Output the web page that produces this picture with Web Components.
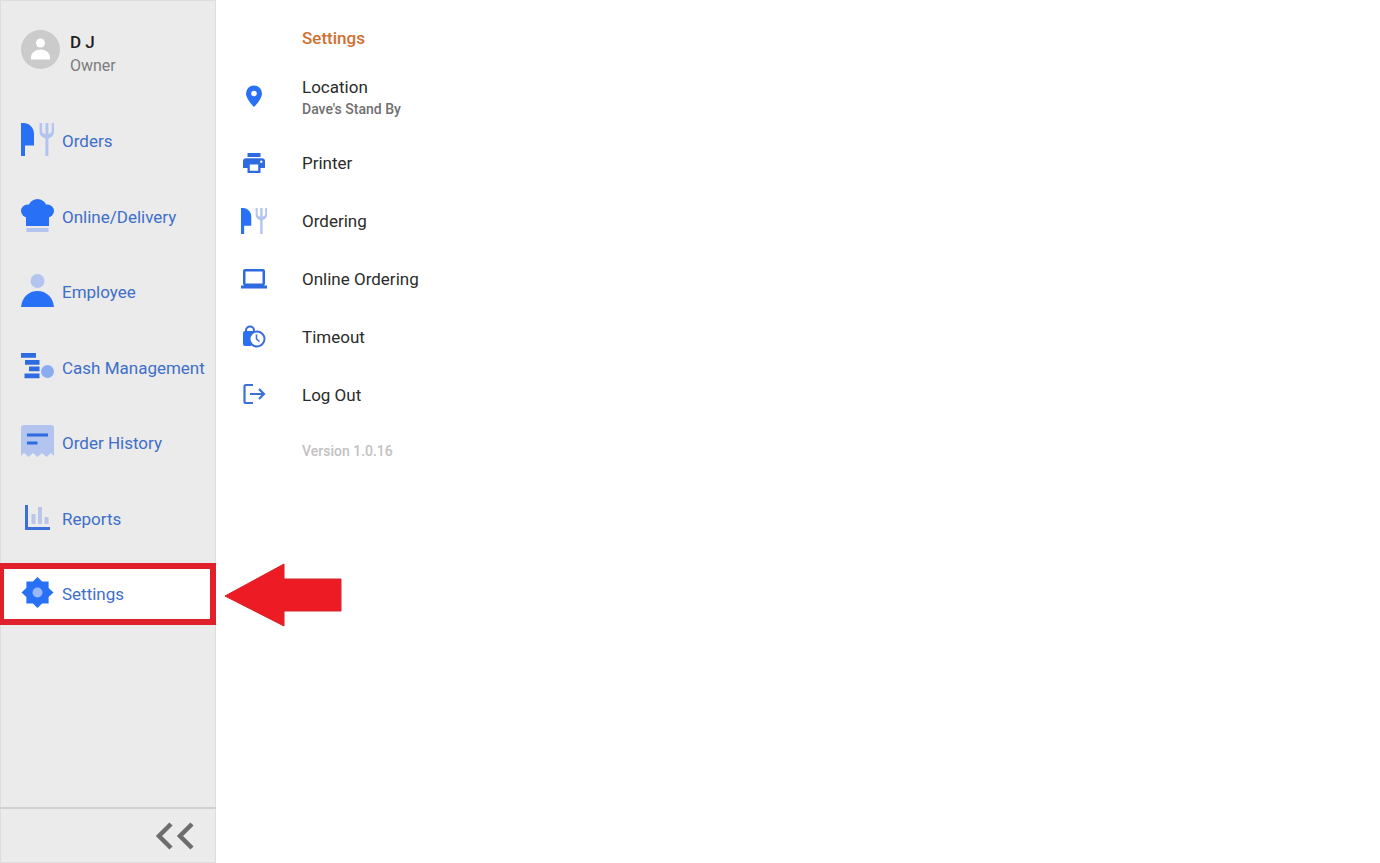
<!DOCTYPE html>
<html lang="en">
<head>
<meta charset="utf-8">
<title>Settings</title>
<style>
    body {
        margin: 0;
        font-family: Roboto, "Liberation Sans", sans-serif;
        font-size: 17px;
        line-height: 22px;
        color: #2b2b2b;
        background: #fff;
    }
</style>
</head>
<body>
<pos-app>
    <side-bar slot="sidebar">
        <user-badge slot="user" name="D J" role-name="Owner"></user-badge>
        <nav-item icon="cutlery" href="#orders">Orders</nav-item>
        <nav-item icon="chef" href="#online">Online/Delivery</nav-item>
        <nav-item icon="person" href="#employee">Employee</nav-item>
        <nav-item icon="cash" href="#cash">Cash Management</nav-item>
        <nav-item icon="receipt" href="#history">Order History</nav-item>
        <nav-item icon="chart" href="#reports">Reports</nav-item>
        <nav-item icon="gear" href="#settings" active>Settings<pointer-arrow slot="pointer"></pointer-arrow></nav-item>
    </side-bar>
    <settings-panel heading="Settings" version="Version 1.0.16">
        <settings-row icon="pin" tall>Location<span slot="note">Dave's Stand By</span></settings-row>
        <settings-row icon="printer">Printer</settings-row>
        <settings-row icon="cutlery">Ordering</settings-row>
        <settings-row icon="laptop">Online Ordering</settings-row>
        <settings-row icon="timeout">Timeout</settings-row>
        <settings-row icon="logout">Log Out</settings-row>
    </settings-panel>
</pos-app>

<script>
const icons = {
    cutlery: `<svg viewBox="0 0 33 33">
        <path fill="#2870f5" d="M0 0h2.500C9 .5 13 5 13 11v11.500H4V33H0z"/>
        <path fill="#b3c5ee" d="M18.500 0h2.600v8q0 2 3.300 3V0h3v11q3.300-1 3.300-3V0H33v9q0 4.500-5.600 6.500V33h-3V15.500q-5.900-2-5.900-6.500z"/>
    </svg>`,
    chef: `<svg viewBox="0 0 33 33">
        <circle cx="6.500" cy="12" r="6.500" fill="#2870f5"/>
        <circle cx="26.500" cy="12" r="6.500" fill="#2870f5"/>
        <circle cx="16.500" cy="9.500" r="9.500" fill="#2870f5"/>
        <path fill="#2870f5" d="M5 12h23v15H5z"/>
        <path fill="#b3c5ee" d="M5.500 29h22v4h-22z"/>
    </svg>`,
    person: `<svg viewBox="0 0 33 33">
        <circle cx="16.500" cy="7" r="7" fill="#b3c5ee"/>
        <path fill="#2870f5" d="M0 33C1 23 8 17 16.500 17S32 23 33 33z"/>
    </svg>`,
    cash: `<svg viewBox="0 0 33 33">
        <path fill="#2f6be0" d="M0 3h15v4.800H0zM4 10h14.500v4.800H4zM8 16.500h10.500v4.800H8zM3.500 23.500h15v4.800h-15z"/>
        <circle cx="26.500" cy="21.500" r="6.500" fill="#8babf0"/>
    </svg>`,
    receipt: `<svg viewBox="0 0 33 33">
        <path fill="#b3c5ee" d="M3 0h27q3 0 3 3v28l-3-3-4.500 4-4.500-4-4.500 4-4.500-4-4.500 4L3 28l-3 3V3q0-3 3-3z"/>
        <path fill="#2f6be0" d="M6 8.500h21v3H6zM6 16.500h10.500v3H6z"/>
    </svg>`,
    chart: `<svg viewBox="0 0 33 33">
        <path fill="#3b70da" d="M4 4h3v22h22v3H4z"/>
        <path fill="#b9c6e9" d="M10.500 13h4v10h-4zM17 6h4v17h-4zM23.500 16h4v7h-4z"/>
    </svg>`,
    gear: `<svg viewBox="0 0 33 33">
        <path fill="#2870f5" d="M16.500 1l4.600 4.500h6.500V12l4.900 4.500-4.900 4.600v6.500h-6.500L16.500 32l-4.600-4.400H5.400v-6.500L.5 16.500 5.400 12V5.500h6.500z"/>
        <circle cx="16.500" cy="16.500" r="5" fill="#98b8fa"/>
    </svg>`,
    pin: `<svg viewBox="0 0 26 26">
        <path fill="#2870f5" fill-rule="evenodd" d="M13 .5a8 8 0 0 0-8 8c0 5.800 8 13.500 8 13.500s8-7.700 8-13.500a8 8 0 0 0-8-8zm0 5.200a2.800 2.800 0 1 1 0 5.600 2.800 2.800 0 0 1 0-5.600z"/>
    </svg>`,
    printer: `<svg viewBox="0 0 26 26">
        <path fill="#2f6be0" fill-rule="evenodd" d="M6.500 3h13v4h-13zM5 8.200h16a3 3 0 0 1 3 3V18h-4.500v5h-13v-5H2v-6.800a3 3 0 0 1 3-3zM8.800 14.500v6.200h8.400v-6.200zM20.300 10.500a1.200 1.200 0 1 0 0 2.400 1.200 1.200 0 0 0 0-2.400z"/>
    </svg>`,
    laptop: `<svg viewBox="0 0 26 26">
        <path fill="#2f6be0" fill-rule="evenodd" d="M4 3h18q2 0 2 2v12.500q0 1-1 2h3v3H0v-3h3q-1-1-1-2V5q0-2 2-2zm.5 2.500v12h17v-12z"/>
    </svg>`,
    timeout: `<svg viewBox="0 0 26 26">
        <path fill="none" stroke="#2f6be0" stroke-width="2" d="M5 9V6.500a4 4 0 0 1 8 0V8"/>
        <path fill="#2870f5" d="M4 7h12v5L10 22H4q-2 0-2-2V9q0-2 2-2z"/>
        <circle cx="16" cy="15" r="7.500" fill="#fff" stroke="#3b70da" stroke-width="2"/>
        <path fill="none" stroke="#3b70da" stroke-width="1.600" d="M15.500 10.500V15l3 2.500"/>
    </svg>`,
    logout: `<svg viewBox="0 0 26 26">
        <path fill="none" stroke="#3b70da" stroke-width="2.200" d="M12 3H5q-1.500 0-1.500 1.500v15Q3.500 21 5 21h7M9 12h14M18 7l5 5-5 5"/>
    </svg>`
};

// attach an open shadow root and fill it
function render(el, html) {
    el.attachShadow({ mode: 'open' }).innerHTML = html;
}

class PosApp extends HTMLElement {
    constructor() {
        super();
        render(this, `
        <style>
            :host {
                display: flex;
                min-height: 100vh;
            }
            main {
                flex: 1;
            }
        </style>
        <slot name="sidebar"></slot>
        <main><slot></slot></main>
        `);
    }
}

class SideBar extends HTMLElement {
    constructor() {
        super();
        render(this, `
        <style>
            :host {
                display: flex;
                flex-direction: column;
                flex: none;
                min-width: 216px;
                background: #ebebeb;
                box-shadow: inset 0 0 0 1px #dedede;
            }
            header {
                padding: 30px 21px 32px;
            }
            nav {
                display: flex;
                flex-direction: column;
                justify-content: space-between;
                flex: 1;
                max-height: 515px;
            }
            footer {
                display: flex;
                justify-content: flex-end;
                margin-top: auto;
                padding: 13px 22px;
                border-top: 2px solid #d0d0d0;
            }
            button {
                display: block;
                padding: 0;
                border: none;
                background: none;
                cursor: pointer;
            }
            svg {
                display: block;
                width: 40px;
                height: 28px;
            }
        </style>
        <header><slot name="user"></slot></header>
        <nav><slot></slot></nav>
        <footer>
            <button aria-label="Collapse menu">
                <svg viewBox="0 0 40 28"><path fill="none" stroke="#6d6d6d" stroke-width="4.500" d="M17 2L5 14l12 12M38 2L26 14l12 12"/></svg>
            </button>
        </footer>
        `);
    }
}

class UserBadge extends HTMLElement {
    connectedCallback() {
        render(this, `
        <style>
            :host {
                display: flex;
                gap: 10px;
            }
            svg {
                width: 39px;
                height: 39px;
            }
            .name {
                font-weight: 500;
                line-height: 24px;
                color: #222;
            }
            .role {
                font-size: 16px;
                line-height: 24px;
                color: #7b7b7b;
            }
        </style>
        <svg viewBox="0 0 39 39">
            <circle cx="19.500" cy="19.500" r="19.500" fill="#cbcbcb"/>
            <circle cx="19.500" cy="13" r="4.500" fill="#fff"/>
            <path fill="#fff" d="M10 29.500v-2c0-5 4.500-8 9.500-8s9.500 3 9.500 8v2z"/>
        </svg>
        <div>
            <div class="name">${this.getAttribute('name')}</div>
            <div class="role">${this.getAttribute('role-name')}</div>
        </div>
        `);
    }
}

class NavItem extends HTMLElement {
    connectedCallback() {
        render(this, `
        <style>
            :host {
                display: block;
                position: relative;
            }
            a {
                display: flex;
                align-items: center;
                gap: 8px;
                min-height: 50px;
                padding: 0 0 0 17px;
                border: 6px solid transparent;
                border-left-width: 4px;
                color: #3f6fc9;
                text-decoration: none;
                white-space: nowrap;
            }
            :host([active]) a {
                border-color: #e0202b;
                background: #fff;
            }
            svg {
                display: block;
                width: 33px;
                height: 33px;
                margin-bottom: 3px;
            }
        </style>
        <a href="${this.getAttribute('href')}">${icons[this.getAttribute('icon')]}<span><slot></slot></span></a>
        <slot name="pointer"></slot>
        `);
    }
}

class PointerArrow extends HTMLElement {
    constructor() {
        super();
        // floats over the page to the right of its nav item
        render(this, `
        <style>
            :host {
                position: absolute;
                left: 100%;
                top: 0;
                margin-left: 8px;
            }
            svg {
                display: block;
                width: 118px;
                height: 64px;
            }
        </style>
        <svg viewBox="0 0 118 64"><path fill="#ed1c24" stroke="#d2232b" d="M1 33L60 1v15h57v32H60v15z"/></svg>
        `);
    }
}

class SettingsPanel extends HTMLElement {
    connectedCallback() {
        render(this, `
        <style>
            :host {
                display: block;
                padding: 27px 25px;
            }
            h1 {
                margin: 0 0 17px 61px;
                font-size: 17px;
                font-weight: 500;
                color: #d2702f;
            }
            p {
                margin: 16px 0 0 61px;
                font-size: 14px;
                font-weight: 500;
                color: #c2c2c2;
            }
        </style>
        <h1>${this.getAttribute('heading')}</h1>
        <div><slot></slot></div>
        <p>${this.getAttribute('version')}</p>
        `);
    }
}

class SettingsRow extends HTMLElement {
    connectedCallback() {
        render(this, `
        <style>
            :host {
                display: block;
            }
            :host([tall]) {
                margin-bottom: 4px;
            }
            button {
                display: flex;
                align-items: center;
                gap: 35px;
                width: 100%;
                min-height: 58px;
                padding: 10px 0;
                border: none;
                background: none;
                font: inherit;
                color: inherit;
                text-align: left;
                cursor: pointer;
            }
            svg {
                display: block;
                width: 26px;
                height: 26px;
            }
            ::slotted([slot="note"]) {
                display: block;
                font-size: 14px;
                font-weight: 500;
                color: #707070;
            }
        </style>
        <button>${icons[this.getAttribute('icon')]}<span><slot></slot><slot name="note"></slot></span></button>
        `);
    }
}

customElements.define('pos-app', PosApp);
customElements.define('side-bar', SideBar);
customElements.define('user-badge', UserBadge);
customElements.define('nav-item', NavItem);
customElements.define('pointer-arrow', PointerArrow);
customElements.define('settings-panel', SettingsPanel);
customElements.define('settings-row', SettingsRow);
</script>
</body>
</html>
